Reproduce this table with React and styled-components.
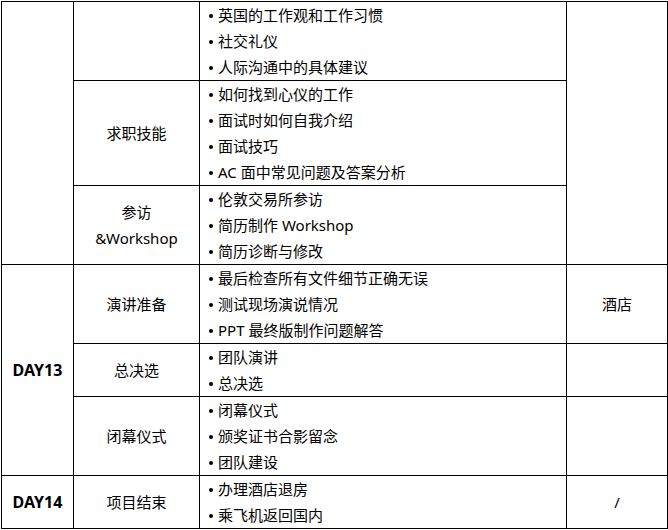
import styled, { createGlobalStyle } from "styled-components";

const GlobalStyle = createGlobalStyle`
  html, body {
    margin: 0;
    padding: 0;
    background: #fff;
  }
  body {
    font-family: "Noto Sans", "Noto Sans CJK SC", sans-serif;
    color: #000;
  }
`;

const Page = styled.div`
  padding: 1px 0 0 1px;
`;

const Table = styled.table`
  border-collapse: collapse;
  table-layout: fixed;
  width: 666px;
  font-size: 15px;
  td {
    border: 1px solid #000;
    padding: 0;
    vertical-align: middle;
  }
`;

const Cell = styled.td`
  text-align: ${(p) => (p.$left ? "left" : "center")};
  font-weight: ${(p) => (p.$bold ? 700 : 400)};
  font-size: ${(p) => (p.$bold ? "16px" : "inherit")};
  line-height: 26px;
  padding-left: ${(p) => (p.$left ? "9px" : "0")} !important;
`;

const List = styled.ul`
  list-style: none;
  margin: 0;
  padding: 0;
`;

const Item = styled.li`
  display: flex;
  align-items: center;
  height: 26px;
  white-space: nowrap;
  &::before {
    content: "";
    width: 4px;
    height: 4px;
    border-radius: 50%;
    background: #000;
    margin: 2px 5px 0 0;
    flex: none;
  }
`;

const sections = [
  { name: "", items: ["英国的工作观和工作习惯", "社交礼仪", "人际沟通中的具体建议"] },
  { name: "求职技能", items: ["如何找到心仪的工作", "面试时如何自我介绍", "面试技巧", "AC 面中常见问题及答案分析"] },
  { name: ["参访", "&Workshop"], items: ["伦敦交易所参访", "简历制作 Workshop", "简历诊断与修改"] },
  { name: "演讲准备", items: ["最后检查所有文件细节正确无误", "测试现场演说情况", "PPT 最终版制作问题解答"], day: "DAY13", span: 3, place: "酒店" },
  { name: "总决选", items: ["团队演讲", "总决选"], place: "" },
  { name: "闭幕仪式", items: ["闭幕仪式", "颁奖证书合影留念", "团队建设"], place: "" },
  { name: "项目结束", items: ["办理酒店退房", "乘飞机返回国内"], day: "DAY14", span: 1, place: "/" },
];

const Lines = ({ items }) => (
  <List>
    {items.map((t) => (
      <Item key={t}>{t}</Item>
    ))}
  </List>
);

export default function App() {
  return (
    <Page>
      <GlobalStyle />
      <Table>
        <colgroup>
          <col style={{ width: 72 }} />
          <col style={{ width: 126 }} />
          <col style={{ width: 367 }} />
          <col style={{ width: 101 }} />
        </colgroup>
        <tbody>
          {sections.map((s, i) => (
            <tr key={i}>
              {i === 0 && <Cell rowSpan={3} />}
              {s.day && (
                <Cell rowSpan={s.span} $bold>
                  {s.day}
                </Cell>
              )}
              <Cell>
                {Array.isArray(s.name)
                  ? s.name.map((n) => <div key={n}>{n}</div>)
                  : s.name}
              </Cell>
              <Cell $left>
                <Lines items={s.items} />
              </Cell>
              {i === 0 && <Cell rowSpan={3} />}
              {s.place !== undefined && <Cell>{s.place}</Cell>}
            </tr>
          ))}
        </tbody>
      </Table>
    </Page>
  );
}
